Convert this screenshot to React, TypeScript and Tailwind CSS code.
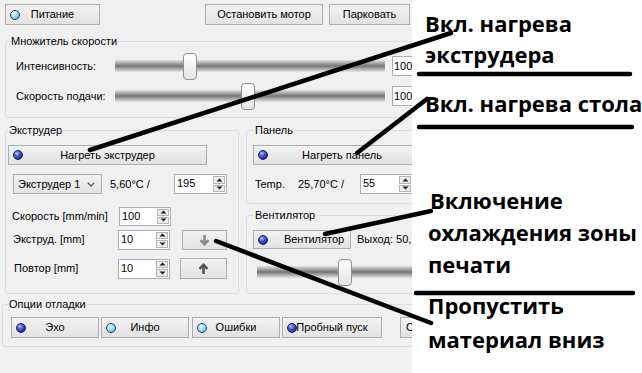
import type { ReactNode } from 'react';

const ledDark =
  'bg-[radial-gradient(circle_at_35%_30%,#c4cdff_0%,#5266d6_30%,#22349a_70%,#101a55_100%)] border-[#142060]';
const ledLight =
  'bg-[radial-gradient(circle_at_35%_30%,#ffffff_0%,#b4ecff_30%,#5cc4f2_75%,#2f86c6_100%)] border-[#1d3c6c]';

function Led({ on }: { on?: boolean }) {
  return <span className={`block h-[10px] w-[10px] rounded-full border ${on ? ledLight : ledDark}`} />;
}

const btn =
  'border border-[#adadad] bg-linear-to-b from-[#f2f2f2] to-[#e2e2e2] text-black whitespace-nowrap';

function Btn({ className = '', children }: { className?: string; children: ReactNode }) {
  return <div className={`flex items-center justify-center ${btn} ${className}`}>{children}</div>;
}

// кнопка-переключатель с индикатором слева
function LedButton({
  on,
  className = '',
  children,
}: {
  on?: boolean;
  className?: string;
  children: ReactNode;
}) {
  return (
    <div className={`relative flex items-center justify-center ${btn} ${className}`}>
      <span className="absolute left-[4px] top-1/2 -translate-y-1/2">
        <Led on={on} />
      </span>
      {children}
    </div>
  );
}

function Tri({ up }: { up?: boolean }) {
  return (
    <svg width="7" height="4" viewBox="0 0 7 4">
      <path d={up ? 'M0.5 3.5L3.5 0.5L6.5 3.5Z' : 'M0.5 0.5L3.5 3.5L6.5 0.5Z'} fill="#1a1a1a" />
    </svg>
  );
}

function Spin({ value, className = '' }: { value: string; className?: string }) {
  return (
    <div className={`flex border border-[#abadb3] bg-white ${className}`}>
      <span className="flex-1 pl-[2px] leading-[17px]">{value}</span>
      <div className="my-[1px] mr-[1px] flex w-[12px] flex-col gap-[1px]">
        <div className="flex flex-1 items-center justify-center border border-[#b5b5b5] bg-[#ececec]">
          <Tri up />
        </div>
        <div className="flex flex-1 items-center justify-center border border-[#b5b5b5] bg-[#ececec]">
          <Tri />
        </div>
      </div>
    </div>
  );
}

function Slider({ thumb, className = '' }: { thumb: number; className?: string }) {
  return (
    <div className={`relative flex h-[28px] items-center ${className}`}>
      <div className="h-[12px] w-full bg-linear-to-b from-[#e2e2e2] via-[#777777] to-[#e6e6e6]" />
      <div
        className="absolute top-[1px] h-[27px] w-[14px] rounded-[4px] border border-[#8f8f8f] bg-linear-to-b from-[#ffffff] to-[#e4e4e4]"
        style={{ left: thumb }}
      />
    </div>
  );
}

function Arrow({ down, color }: { down?: boolean; color: string }) {
  return (
    <svg width="11" height="12" viewBox="0 0 11 12" className={down ? '' : 'rotate-180'}>
      <path d="M5.5 1V10M1.5 6.2L5.5 10.2L9.5 6.2" stroke={color} strokeWidth="2.6" fill="none" />
    </svg>
  );
}

function Panel() {
  return (
    <div className="h-full w-[412px] shrink-0 overflow-hidden bg-[#f0f0f0]">
      <div className="mt-[4px] flex h-[21px] pl-[5px] pr-[2px]">
        <LedButton on className="w-[95px]">
          Питание
        </LedButton>
        <div className="ml-auto flex gap-[6px]">
          <Btn className="w-[118px]">Остановить мотор</Btn>
          <Btn className="w-[81px]">Парковать</Btn>
        </div>
      </div>

      <fieldset className="ml-[5px] mt-[10px] h-[83px] w-[430px] rounded-[3px] border border-[#d5dfe5] pl-[4px]">
        <legend className="px-[1px] leading-[13px]">Множитель скорости</legend>
        <div className="mt-[3px] flex h-[30px] items-center pl-[6px]">
          <span className="w-[99px]">Интенсивность:</span>
          <Slider thumb={68} className="w-[270px]" />
          <div className="ml-[7px] h-[20px] w-[40px] border border-[#abadb3] bg-white pl-[1px] leading-[18px]">100</div>
        </div>
        <div className="flex h-[30px] items-center pl-[6px]">
          <span className="w-[99px]">Скорость подачи:</span>
          <Slider thumb={126} className="w-[270px]" />
          <div className="ml-[7px] h-[20px] w-[40px] border border-[#abadb3] bg-white pl-[1px] leading-[18px]">100</div>
        </div>
      </fieldset>

      <div className="mt-[6px] flex">
        <fieldset className="ml-[5px] h-[170px] w-[234px] shrink-0 rounded-[3px] border border-[#d5dfe5] pl-[2px]">
          <legend className="px-[1px] leading-[13px]">Экструдер</legend>
          <LedButton className="mt-[8px] h-[20px] w-[199px]">Нагреть экструдер</LedButton>
          <div className="mt-[9px] flex h-[20px] items-center">
            <div className={`ml-[5px] flex h-[20px] w-[89px] items-center pl-[4px] pr-[6px] ${btn}`}>
              <span className="flex-1">Экструдер 1</span>
              <svg width="8" height="5" viewBox="0 0 8 5">
                <path d="M0.8 0.8L4 4L7.2 0.8" stroke="#555" strokeWidth="1.3" fill="none" />
              </svg>
            </div>
            <span className="ml-[8px] w-[64px]">5,60°C /</span>
            <Spin value="195" className="h-[20px] w-[53px]" />
          </div>
          <div className="mt-[12px] flex h-[20px] items-center">
            <span className="ml-[4px] w-[107px]">Скорость [mm/min]</span>
            <Spin value="100" className="h-[19px] w-[52px]" />
          </div>
          <div className="mt-[3px] flex h-[21px] items-center">
            <span className="ml-[5px] w-[105px]">Экструд. [mm]</span>
            <Spin value="10" className="h-[20px] w-[52px]" />
            <Btn className="ml-[12px] h-[20px] w-[45px]">
              <Arrow down color="#8a8a8a" />
            </Btn>
          </div>
          <div className="mt-[8px] flex h-[21px] items-center">
            <span className="ml-[6px] w-[104px]">Повтор [mm]</span>
            <Spin value="10" className="h-[20px] w-[52px]" />
            <Btn className="ml-[10px] h-[21px] w-[47px]">
              <Arrow color="#555555" />
            </Btn>
          </div>
        </fieldset>

        <div className="ml-[7px] flex flex-col">
          <fieldset className="h-[80px] w-[200px] rounded-[3px] border border-[#d5dfe5] pl-[6px]">
            <legend className="ml-[1px] px-[1px] leading-[13px]">Панель</legend>
            <LedButton className="mt-[8px] h-[20px] w-[178px]">Нагреть панель</LedButton>
            <div className="mt-[9px] flex h-[20px] items-center">
              <span className="ml-[2px] w-[43px]">Temp.</span>
              <span className="w-[62px]">25,70°C /</span>
              <Spin value="55" className="h-[20px] w-[53px]" />
            </div>
          </fieldset>
          <fieldset className="mt-[5px] h-[85px] w-[200px] rounded-[3px] border border-[#d5dfe5] pl-[6px]">
            <legend className="ml-[1px] px-[1px] leading-[13px]">Вентилятор</legend>
            <div className="mt-[8px] flex h-[19px] items-center">
              <LedButton className="h-[19px] w-[98px] pl-[24px]">Вентилятор</LedButton>
              <span className="ml-[6px] whitespace-nowrap">Выход: 50,</span>
            </div>
            <Slider thumb={81} className="ml-[4px] mt-[9px] w-[200px]" />
          </fieldset>
        </div>
      </div>

      <fieldset className="ml-[2px] mt-[4px] h-[49px] w-[440px] rounded-[3px] border border-[#d5dfe5] pl-[5px]">
        <legend className="px-[1px] leading-[13px]">Опции отладки</legend>
        <div className="mt-[6px] flex h-[21px]">
          <LedButton className="ml-[3px] w-[88px]">Эхо</LedButton>
          <LedButton on className="ml-[2px] w-[88px]">
            Инфо
          </LedButton>
          <LedButton on className="ml-[3px] w-[88px]">
            Ошибки
          </LedButton>
          <LedButton className="ml-[2px] w-[100px]">Пробный пуск</LedButton>
          <div className={`ml-[18px] flex w-[60px] items-center pl-[5px] ${btn}`}>Сброс</div>
        </div>
      </fieldset>
    </div>
  );
}

function Notes() {
  return (
    <div className="flex flex-1 flex-col whitespace-nowrap pl-[13px] font-['Open_Sans',sans-serif] text-[22px] font-bold text-black">
      <div className="mt-[8px] leading-[31px]">
        <div>Вкл. нагрева</div>
        <div>экструдера</div>
      </div>
      <div className="mt-[18px] leading-[31px]">Вкл. нагрева стола</div>
      <div className="mt-[65px] pl-[5px] leading-[32px]">
        <div>Включение</div>
        <div className="-ml-[2px]">охлаждения зоны</div>
        <div className="-ml-[2px]">печати</div>
      </div>
      <div className="mt-[8px] pl-[3px] leading-[34px]">
        <div>Пропустить</div>
        <div>материал вниз</div>
      </div>
    </div>
  );
}

export default function App() {
  return (
    <div className="relative flex h-[373px] w-[642px] overflow-hidden bg-white font-['Liberation_Sans',Arial,sans-serif] text-[11px] text-black">
      <Panel />
      <Notes />
      <svg
        className="pointer-events-none absolute inset-0"
        width="642"
        height="373"
        viewBox="0 0 642 373"
        stroke="#000"
        strokeWidth="4.5"
        strokeLinecap="round"
      >
        <line x1="90" y1="150" x2="451" y2="33" />
        <line x1="357" y1="153" x2="427" y2="99" />
        <line x1="325" y1="234" x2="431" y2="211" />
        <line x1="216" y1="241" x2="431" y2="323" />
        <line x1="419" y1="74" x2="630" y2="74" />
        <line x1="419" y1="127" x2="632" y2="127" />
        <line x1="416" y1="293" x2="633" y2="293" />
      </svg>
    </div>
  );
}
